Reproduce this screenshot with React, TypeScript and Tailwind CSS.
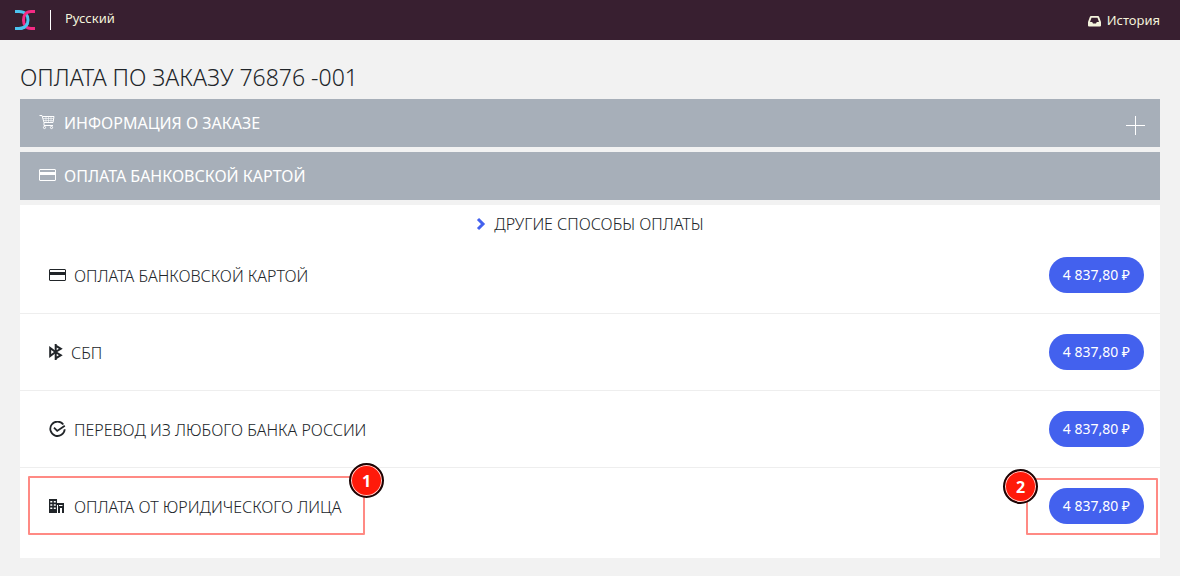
import React from 'react';

function Logo() {
  return (
    <svg width="20" height="20" viewBox="0 0 20 20" fill="none" aria-hidden="true">
      <path d="M0 1.500H4C10 1.500 13 5 13 10S10 18.500 4 18.500H0" stroke="#4cc3f0" strokeWidth="3" />
      <path d="M20 1.500H16C11 1.500 8.500 5 8.500 10S11 18.500 16 18.500H20" stroke="#f52a84" strokeWidth="3" />
      <path d="M12.300 13.500C11 16.800 8 18.500 4 18.500" stroke="#4cc3f0" strokeWidth="3" />
    </svg>
  );
}

function InboxIcon() {
  return (
    <svg width="13" height="11" viewBox="0 0 13 11" fill="currentColor" aria-hidden="true">
      <path fillRule="evenodd" d="M3 0H10Q10.800 0 11.200 1L13 6V9.500Q13 10.500 12 10.500H1Q0 10.500 0 9.500V6L1.800 1Q2.200 0 3 0ZM3.500 1.800L2 6H4.200L5 7.500H8L8.800 6H11L9.500 1.800Z" />
    </svg>
  );
}

function CartIcon() {
  return (
    <svg width="17" height="18" viewBox="0 0 17 18" fill="none" stroke="currentColor" aria-hidden="true">
      <path d="M0.500 1.500H3L5 8.500V11.500H14M3.500 2.500H15L14 8.500H5" />
      <path d="M4 4.500H14.500M4.500 6.500H14.200M7 2.500V8.500M9.500 2.500V8.500M12 2.500V8.500" strokeWidth="0.600" />
      <circle cx="5.500" cy="13.500" r="1.100" />
      <circle cx="12.500" cy="13.500" r="1.100" />
    </svg>
  );
}

function CardIcon() {
  return (
    <svg width="17" height="18" viewBox="0 0 17 18" aria-hidden="true">
      <rect x="0.500" y="2.500" width="16" height="11" rx="0.500" fill="none" stroke="currentColor" />
      <path d="M1 5H16V8H1Z" fill="currentColor" />
    </svg>
  );
}

function SbpIcon() {
  return (
    <svg width="14" height="18" viewBox="0 0 14 18" fill="none" stroke="currentColor" strokeWidth="2" aria-hidden="true">
      <path d="M1.200 4V12L6.500 8Z" />
      <path d="M6.700 0V16M6.700 1.700L11.800 4.800L6.500 8L11.800 11.200L6.700 14.300" />
    </svg>
  );
}

function CheckIcon() {
  return (
    <svg width="17" height="18" viewBox="0 0 17 18" fill="none" stroke="currentColor" strokeWidth="1.800" aria-hidden="true">
      <path d="M14.300 3.500A7.200 7.200 0 1 0 15.700 8.200" />
      <path d="M5 6.700L8.200 9.900L15.800 4.700" />
    </svg>
  );
}

function BuildingIcon() {
  return (
    <svg width="17" height="18" viewBox="0 0 17 18" fill="currentColor" aria-hidden="true">
      <path fillRule="evenodd" d="M0 1H8V15H0ZM1.300 3V4.500H3.300V3ZM4.800 3V4.500H6.800V3ZM1.300 6.300V7.800H3.300V6.300ZM4.800 6.300V7.800H6.800V6.300ZM1.300 9.600V11.100H3.300V9.600ZM4.800 9.600V11.100H6.800V9.600Z" />
      <path fillRule="evenodd" d="M8 5H15V15H13V10H11V15H9V7H8ZM10 7V8H13.500V7Z" />
    </svg>
  );
}

function Marker({ children }: { children: React.ReactNode }) {
  return (
    <span className="flex size-[35px] items-center justify-center rounded-full border-2 border-[#1a0505] bg-[#ff1a0a] font-['Open_Sans',sans-serif] text-base font-bold text-white inset-ring inset-ring-white/80">
      {children}
    </span>
  );
}

const methods = [
  { title: 'ОПЛАТА БАНКОВСКОЙ КАРТОЙ', Icon: CardIcon },
  { title: 'СБП', Icon: SbpIcon },
  { title: 'ПЕРЕВОД ИЗ ЛЮБОГО БАНКА РОССИИ', Icon: CheckIcon },
  { title: 'ОПЛАТА ОТ ЮРИДИЧЕСКОГО ЛИЦА', Icon: BuildingIcon, marked: true },
];

export default function App() {
  return (
    <div className="min-h-screen bg-[#f2f2f2] font-['Noto_Sans',sans-serif] text-[#212529]">
      <header className="flex h-10 items-center justify-between bg-[#381f30] pr-5 pl-[15px] text-[13px] text-[#f3f3dc]">
        <div className="flex items-center">
          <a href="#" aria-label="DC"><Logo /></a>
          <span className="ml-[15px] h-5 w-px bg-white" />
          <a href="#" className="ml-[14px] pb-[2px]">Русский</a>
        </div>
        <a href="#" className="flex items-center gap-[6px] pt-[2px]">
          <InboxIcon />
          <span>История</span>
        </a>
      </header>
      <main className="px-5 pt-5 pb-4">
        <h1 className="pt-px pb-[6px] text-[23px] leading-8 font-light">ОПЛАТА ПО ЗАКАЗУ 76876 -001</h1>
        <button type="button" className="flex h-12 w-full items-center justify-between bg-[#a7afb9] pr-[15px] pl-[19px] text-base text-white">
          <span className="flex items-center gap-2"><CartIcon />ИНФОРМАЦИЯ О ЗАКАЗЕ</span>
          <svg className="mt-1" width="19" height="19" viewBox="0 0 19 19" stroke="currentColor" aria-hidden="true">
            <path d="M0 9.500H19M9.500 0V19" />
          </svg>
        </button>
        <h2 className="mt-[5px] flex h-12 items-center gap-2 bg-[#a7afb9] pl-[19px] text-base text-white">
          <CardIcon />ОПЛАТА БАНКОВСКОЙ КАРТОЙ
        </h2>
        <section className="mt-[5px] bg-white pb-[13px]">
          <h3 className="flex h-8 items-center justify-center gap-2 pt-[6px] text-base font-light">
            <svg width="10" height="14" viewBox="0 0 10 14" fill="none" stroke="#4361ee" strokeWidth="3" aria-hidden="true">
              <path d="M2 2L7 7L2 12" />
            </svg>
            ДРУГИЕ СПОСОБЫ ОПЛАТЫ
          </h3>
          <ul>
            {methods.map(({ title, Icon, marked }) => (
              <li key={title} className="relative flex h-[77px] items-center justify-between border-b border-[#eeeeee] pr-4 pl-[29px] last:border-transparent">
                <span className="flex items-center gap-2 pt-[2px] text-base font-light"><Icon />{title}</span>
                <button type="button" className="h-9 rounded-full bg-[#4361ee] px-[14px] text-sm text-white">4 837,80 ₽</button>
                {marked && (
                  <>
                    <span className="pointer-events-none absolute top-[8px] left-[8px] h-[59px] w-[337px] rounded-[1px] border-2 border-[#ff8a84]" />
                    <span className="absolute top-[-5px] left-[329px]"><Marker>1</Marker></span>
                    <span className="pointer-events-none absolute top-[10px] right-[2px] h-[57px] w-[132px] rounded-[1px] border-2 border-[#ff8a84]" />
                    <span className="absolute top-px right-[122px]"><Marker>2</Marker></span>
                  </>
                )}
              </li>
            ))}
          </ul>
        </section>
      </main>
    </div>
  );
}
